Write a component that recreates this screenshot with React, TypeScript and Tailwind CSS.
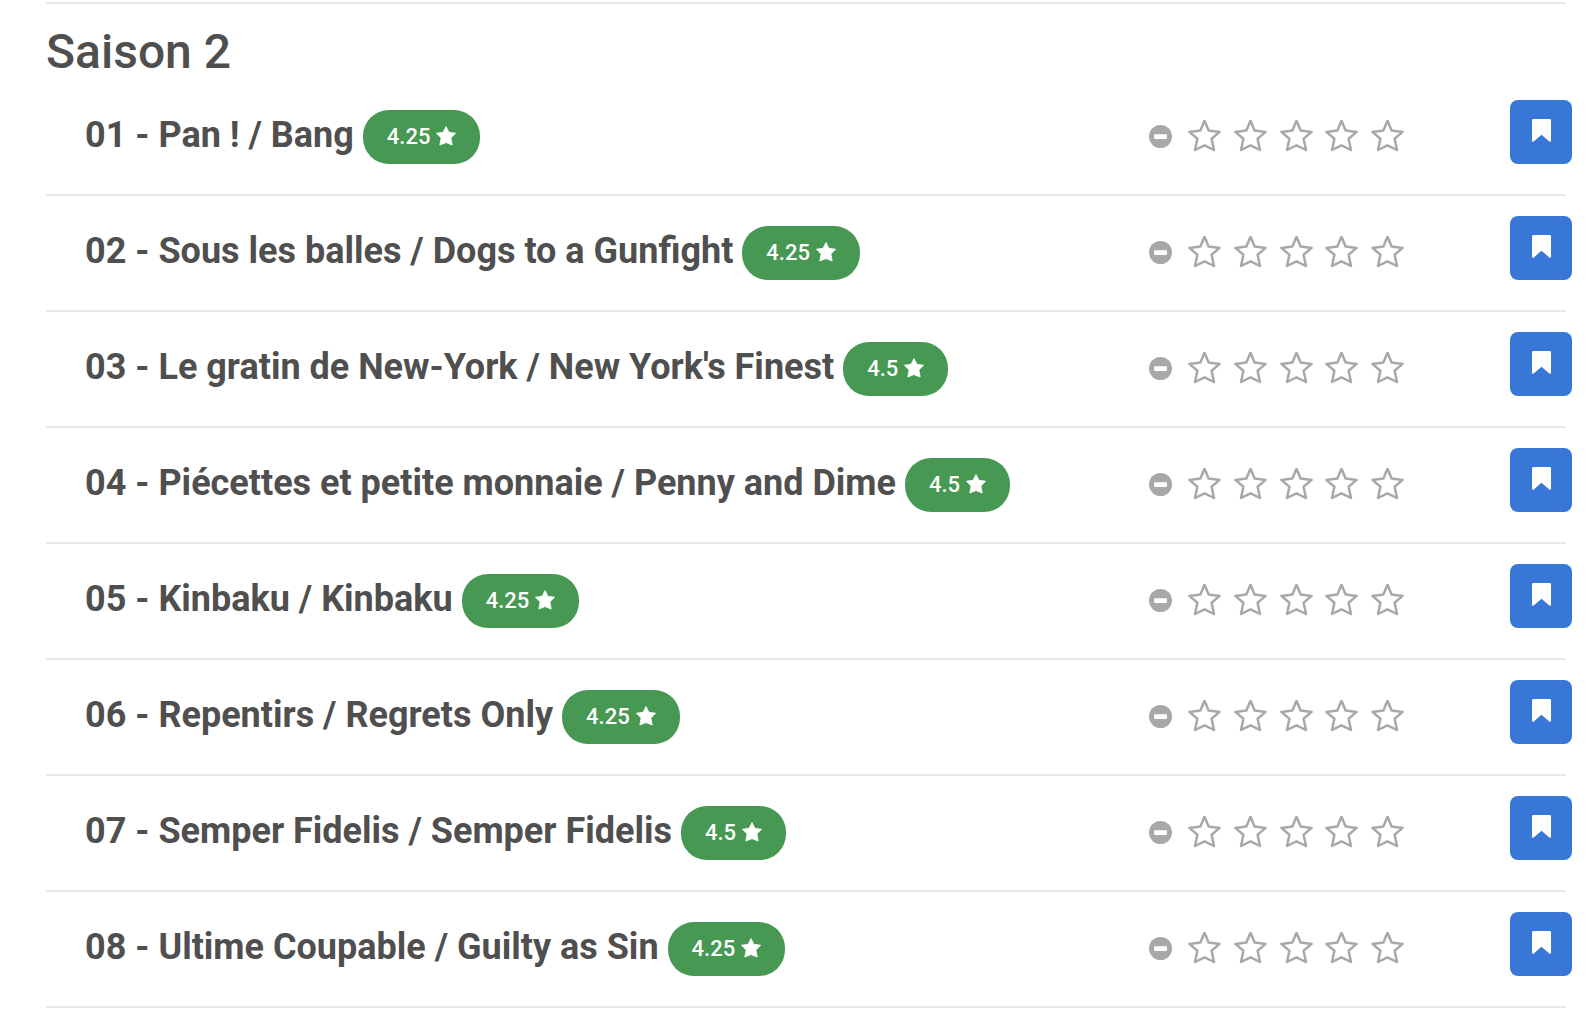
type Episode = { number: string; title: string; score: string };

const episodes: Episode[] = [
  { number: "01", title: "Pan ! / Bang", score: "4.25" },
  { number: "02", title: "Sous les balles / Dogs to a Gunfight", score: "4.25" },
  { number: "03", title: "Le gratin de New-York / New York's Finest", score: "4.5" },
  { number: "04", title: "Piécettes et petite monnaie / Penny and Dime", score: "4.5" },
  { number: "05", title: "Kinbaku / Kinbaku", score: "4.25" },
  { number: "06", title: "Repentirs / Regrets Only", score: "4.25" },
  { number: "07", title: "Semper Fidelis / Semper Fidelis", score: "4.5" },
  { number: "08", title: "Ultime Coupable / Guilty as Sin", score: "4.25" },
];

function StarSolid() {
  return (
    <svg viewBox="0 0 20 20" className="h-5 w-5" fill="currentColor" stroke="currentColor" strokeWidth="0.8" strokeLinejoin="round" aria-hidden="true">
      <path d="M10 0.5 12.9 6.3 19.6 7.2 14.9 11.9 16.2 19 10 16.6 3.8 19 5.1 11.9 0.4 7.2 7.1 6.3Z" />
    </svg>
  );
}

function StarOutline() {
  return (
    <svg viewBox="0 1 33 33" className="h-[33px] w-[33px]" fill="none" stroke="currentColor" strokeWidth="2.5" strokeLinejoin="round" aria-hidden="true">
      <path d="M16.5 1.8 20.6 11.5 31.6 12.9 23.6 19.8 26 31 16.5 26.3 7 31 9.4 19.8 1.4 12.9 12.4 11.5Z" />
    </svg>
  );
}

function MinusCircle() {
  return (
    <svg viewBox="0 0 23 23" className="h-[23px] w-[23px]" aria-hidden="true">
      <circle cx="11.5" cy="11.5" r="11.5" fill="currentColor" />
      <rect x="5" y="9.3" width="13" height="4.6" rx="0.8" fill="#fff" />
    </svg>
  );
}

function Bookmark() {
  return (
    <svg viewBox="0 0 19 23" className="h-[23px] w-[19px]" fill="currentColor" aria-hidden="true">
      <path d="M1.4 0H17.6Q19 0 19 1.4V21.6Q19 23.4 17.3 22.4L9.5 15.8 1.7 22.4Q0 23.4 0 21.6V1.4Q0 0 1.4 0Z" />
    </svg>
  );
}

function EpisodeRow({ episode }: { episode: Episode }) {
  return (
    <li className="flex h-[116px] items-start border-b-2 border-[#e8e8e8] pl-[39px] pt-5">
      <div className="flex min-w-0 flex-1 items-start gap-[9px] whitespace-nowrap">
        <h3 className="text-[36px] font-bold leading-[70px]">
          {episode.number} - {episode.title}
        </h3>
        <span className="mt-[10px] flex h-[54px] items-start gap-1.5 rounded-[26px] bg-[#479852] px-6 pt-[11px] text-[22px] font-medium leading-8 text-white">
          {episode.score}
          <span className="flex h-[30px] items-center">
            <StarSolid />
          </span>
        </span>
      </div>
      <div className="mr-[106px] flex h-[72px] items-center gap-4 text-[#a8a8a8]">
        <button type="button" aria-label={`Effacer la note de l'épisode ${episode.number}`}>
          <MinusCircle />
        </button>
        <div className="flex w-[216px] justify-between">
          {[1, 2, 3, 4, 5].map((n) => (
            <button key={n} type="button" aria-label={`Noter ${n} sur 5`}>
              <StarOutline />
            </button>
          ))}
        </div>
      </div>
      <button
        type="button"
        aria-label={`Marquer l'épisode ${episode.number}`}
        className="-mr-1.5 flex h-16 w-[62px] items-center justify-center rounded-lg bg-[#3877d5] pb-1 text-white"
      >
        <Bookmark />
      </button>
    </li>
  );
}

export default function App() {
  return (
    <main className="min-h-screen bg-white pl-[46px] pr-6 pt-0.5 font-[Roboto,sans-serif] text-[#4f4f4f]">
      <section className="border-t-2 border-[#e8e8e8]">
        <h2 className="pb-0.5 pt-[22px] text-[48px] font-medium leading-[52px]">Saison 2</h2>
        <ul>
          {episodes.map((episode) => (
            <EpisodeRow key={episode.number} episode={episode} />
          ))}
        </ul>
      </section>
    </main>
  );
}
